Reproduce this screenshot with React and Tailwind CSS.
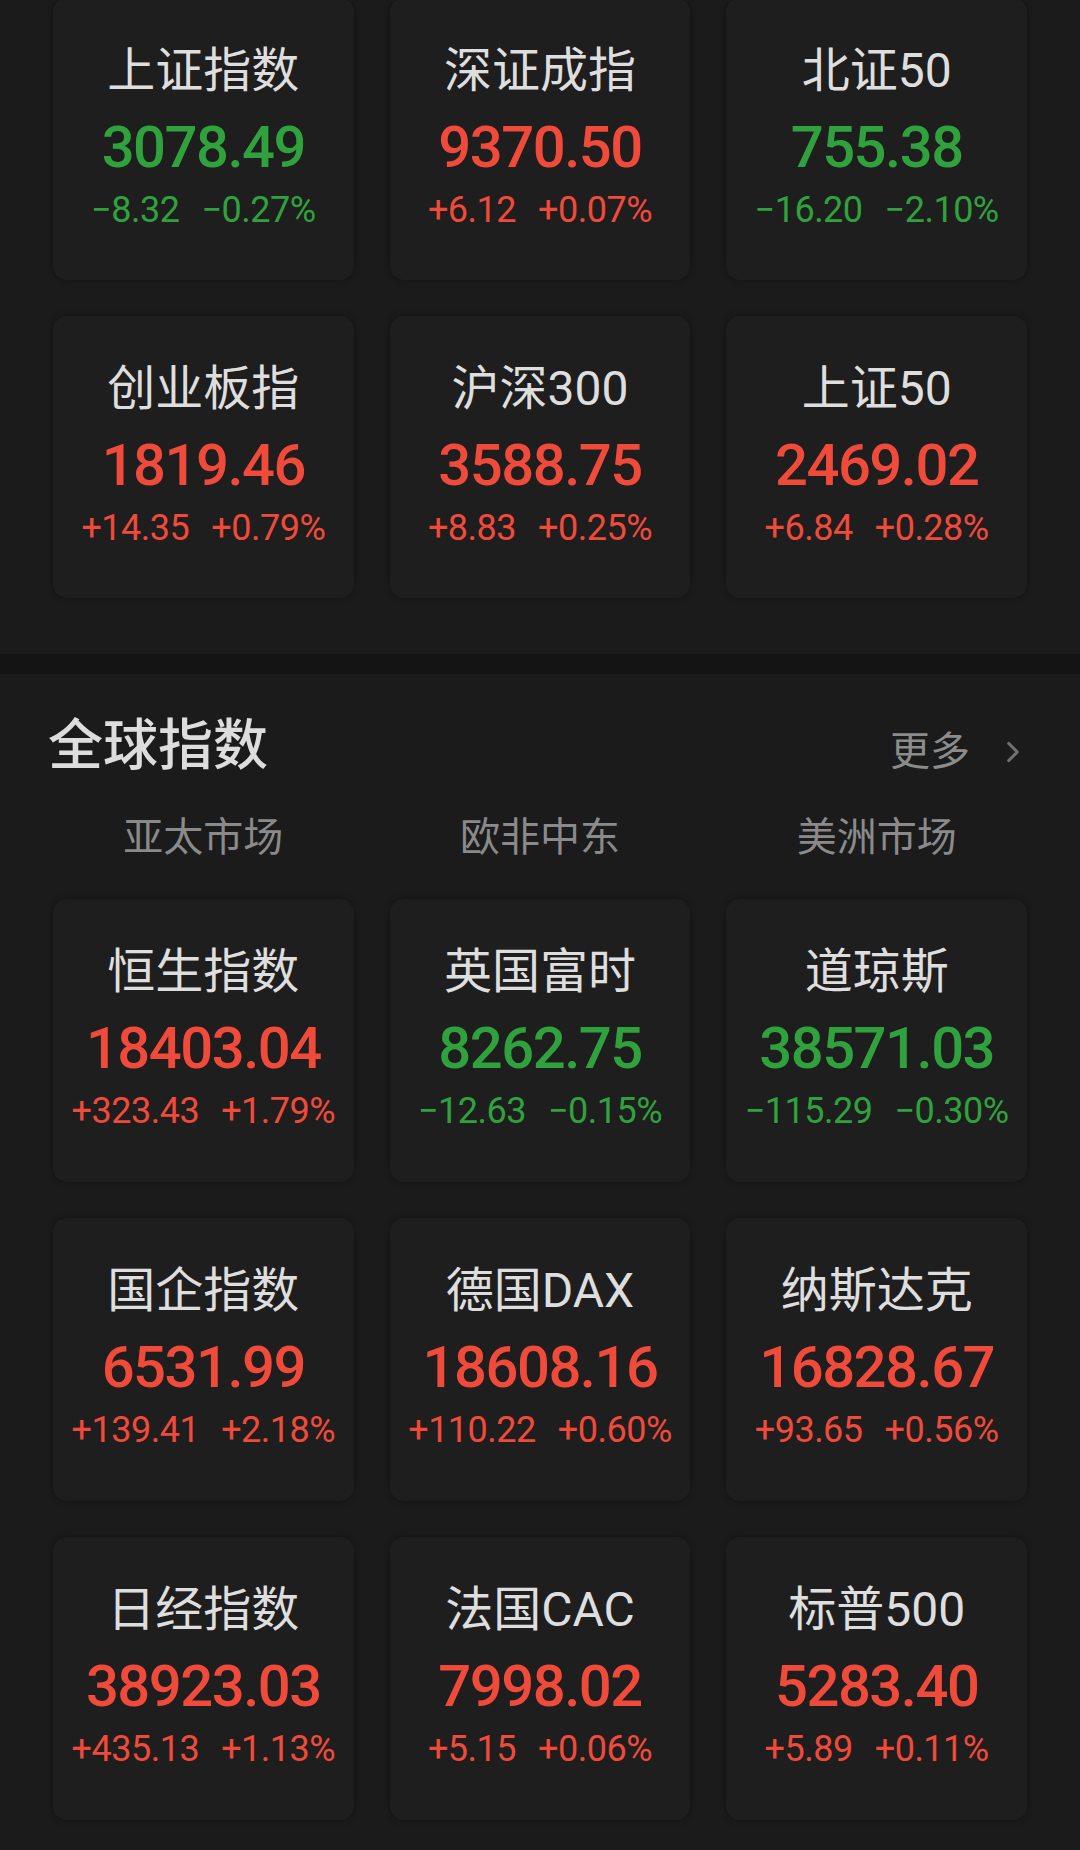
import { ChevronRight } from "lucide-react";

const domestic = [
  { name: "上证指数", value: "3078.49", diff: "−8.32", pct: "−0.27%", up: false },
  { name: "深证成指", value: "9370.50", diff: "+6.12", pct: "+0.07%", up: true },
  { name: "北证50", value: "755.38", diff: "−16.20", pct: "−2.10%", up: false },
  { name: "创业板指", value: "1819.46", diff: "+14.35", pct: "+0.79%", up: true },
  { name: "沪深300", value: "3588.75", diff: "+8.83", pct: "+0.25%", up: true },
  { name: "上证50", value: "2469.02", diff: "+6.84", pct: "+0.28%", up: true },
];

const globalIdx = [
  { name: "恒生指数", value: "18403.04", diff: "+323.43", pct: "+1.79%", up: true },
  { name: "英国富时", value: "8262.75", diff: "−12.63", pct: "−0.15%", up: false },
  { name: "道琼斯", value: "38571.03", diff: "−115.29", pct: "−0.30%", up: false },
  { name: "国企指数", value: "6531.99", diff: "+139.41", pct: "+2.18%", up: true },
  { name: "德国DAX", value: "18608.16", diff: "+110.22", pct: "+0.60%", up: true },
  { name: "纳斯达克", value: "16828.67", diff: "+93.65", pct: "+0.56%", up: true },
  { name: "日经指数", value: "38923.03", diff: "+435.13", pct: "+1.13%", up: true },
  { name: "法国CAC", value: "7998.02", diff: "+5.15", pct: "+0.06%", up: true },
  { name: "标普500", value: "5283.40", diff: "+5.89", pct: "+0.11%", up: true },
];

const tabs = ["亚太市场", "欧非中东", "美洲市场"];

function IndexCard({ item, tall }) {
  const color = item.up ? "text-[#f04a3b]" : "text-[#30a23d]";
  return (
    <div
      className={`flex flex-col items-center rounded-[14px] bg-[#1e1e1e] shadow-[0_0_6px_rgba(0,0,0,0.35)] ${
        tall ? "h-[283px]" : "h-[282px]"
      }`}
    >
      <div className="pt-[49px] text-[48px] leading-[48px] text-[#dedede]">{item.name}</div>
      <div className={`mt-[23px] text-[58px] leading-[58px] font-medium tracking-[-1.5px] ${color}`}>
        {item.value}
      </div>
      <div className={`mt-[16px] flex gap-[22px] text-[36px] leading-[36px] tracking-[-0.5px] ${color}`}>
        <span>{item.diff}</span>
        <span>{item.pct}</span>
      </div>
    </div>
  );
}

export default function App() {
  return (
    <div
      className="w-[1080px] h-[1850px] overflow-hidden bg-[#1b1b1b]"
      style={{ fontFamily: "Roboto, 'Noto Sans CJK SC', sans-serif" }}
    >
      <div className="px-[53px] pb-[56px]">
        <div className="-mt-[2px] grid grid-cols-3 gap-[36px]">
          {domestic.map((item) => (
            <IndexCard key={item.name} item={item} />
          ))}
        </div>
      </div>

      <div className="h-[20px] bg-[#141414]" />

      <div className="pt-[44px]">
        <div className="flex items-end justify-between pl-[48px] pr-[50px]">
          <h2 className="text-[55px] leading-[55px] font-medium text-[#dddddd]">全球指数</h2>
          <div className="flex items-center gap-[26px] pb-[1px]">
            <span className="text-[40px] leading-[40px] text-[#8c8c8c]">更多</span>
            <ChevronRight className="w-[34px] h-[34px] text-[#707070]" strokeWidth={2.2} />
          </div>
        </div>

        <div className="mt-[45px] grid grid-cols-3 gap-[36px] px-[53px]">
          {tabs.map((t) => (
            <div key={t} className="text-center text-[40px] leading-[40px] text-[#8a8a8a]">
              {t}
            </div>
          ))}
        </div>

        <div className="mt-[41px] grid grid-cols-3 gap-[36px] px-[53px]">
          {globalIdx.map((item) => (
            <IndexCard key={item.name} item={item} tall />
          ))}
        </div>
      </div>
    </div>
  );
}
